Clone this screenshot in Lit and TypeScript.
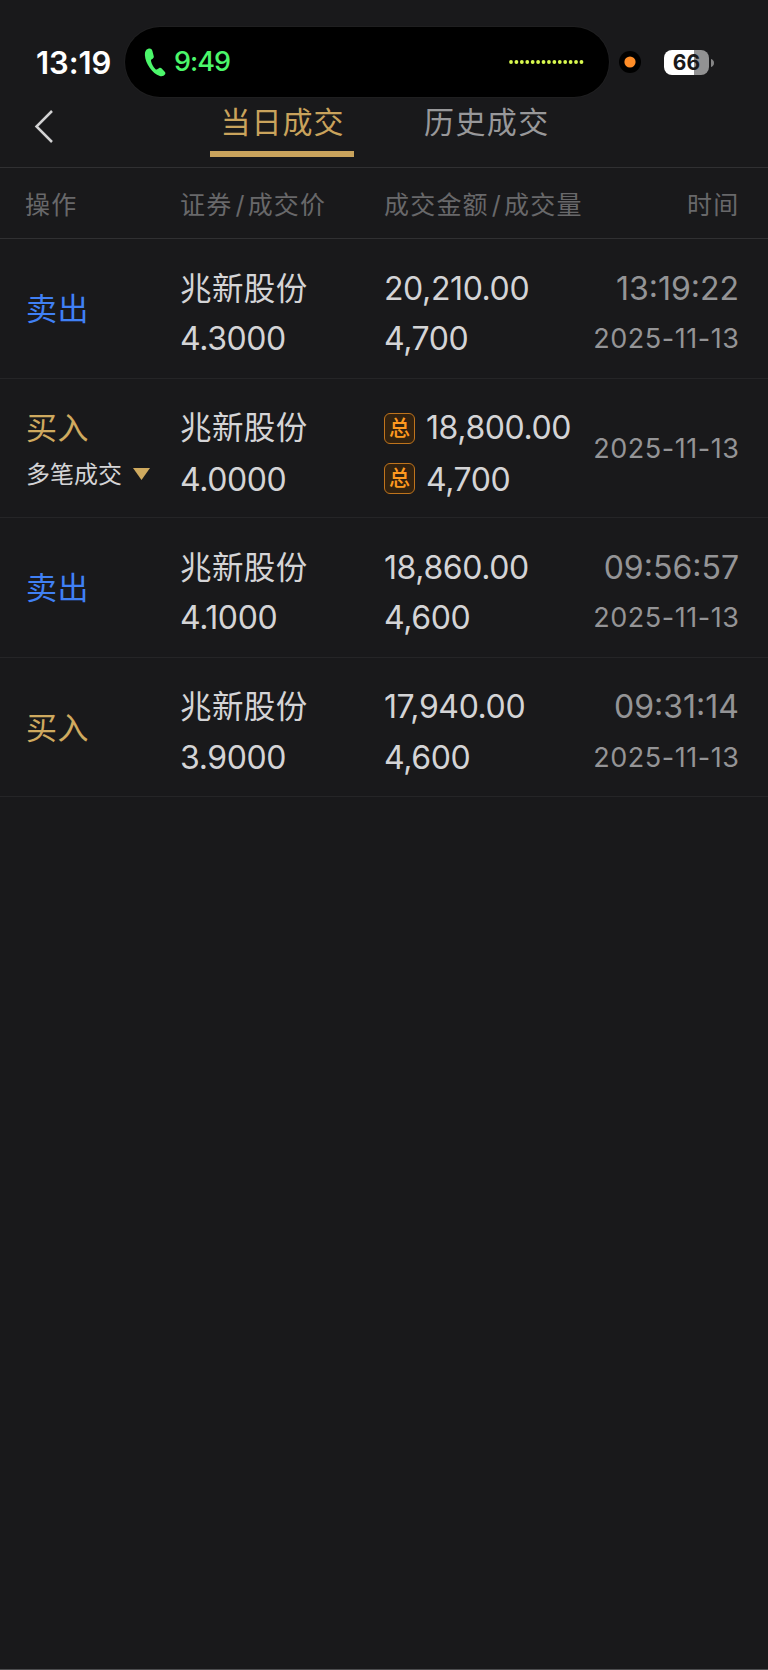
import { LitElement, html, css, svg, nothing } from "lit";
import { customElement, property } from "lit/decorators.js";
import { classMap } from "lit/directives/class-map.js";

interface Trade {
  side: "buy" | "sell";
  name: string;
  price: string;
  amount: string;
  volume: string;
  time?: string;
  date: string;
  merged?: boolean;
}

const TRADES: Trade[] = [
  { side: "sell", name: "兆新股份", price: "4.3000", amount: "20,210.00", volume: "4,700", time: "13:19:22", date: "2025-11-13" },
  { side: "buy", name: "兆新股份", price: "4.0000", amount: "18,800.00", volume: "4,700", date: "2025-11-13", merged: true },
  { side: "sell", name: "兆新股份", price: "4.1000", amount: "18,860.00", volume: "4,600", time: "09:56:57", date: "2025-11-13" },
  { side: "buy", name: "兆新股份", price: "3.9000", amount: "17,940.00", volume: "4,600", time: "09:31:14", date: "2025-11-13" },
];

@customElement("status-bar")
class StatusBar extends LitElement {
  static styles = css`
    :host { display: flex; height: 98px; padding: 27px 0 0 36px; box-sizing: border-box; align-items: flex-start; }
    .clock { width: 89px; height: 70px; line-height: 71px; font-size: 31px; font-weight: 600; color: #fff; letter-spacing: -0.1px; white-space: nowrap; }
    .island { width: 484px; height: 70px; box-sizing: border-box; border-radius: 35px; background: #000; box-shadow: 0 0 0 1px #1f1f20; display: flex; align-items: center; padding: 0 25px 0 19px; }
    .call { margin-left: 8px; font-size: 27px; font-weight: 500; color: #4cf76b; line-height: 68px; letter-spacing: -1px; }
    .wave { margin-left: auto; margin-bottom: 1px; display: block; }
    .mic { width: 22px; height: 22px; margin: 24px 0 0 10px; display: block; }
    .battery { margin: 23px 0 0 23px; display: flex; align-items: center; }
    .cell { width: 45px; height: 25px; border-radius: 8px; background: linear-gradient(90deg, #fff 30px, #929293 30px); color: #19191a; font-size: 21px; font-weight: 700; line-height: 26px; text-align: center; }
    .cap { display: block; margin-left: 2px; }
  `;
  render() {
    return html`
      <div class="clock">13:19</div>
      <div class="island">
        <svg width="22" height="29" viewBox="0 0 22 29">
          <path fill="#4cf76b" d="M4.200 .8C1.800 1.500.7 3.900.9 7.200 1.400 15.500 8.300 25.600 15.800 28c2.200.6 4.300-.1 5.300-1.700.5-.9.3-1.800-.4-2.600l-3-3.200c-.8-.8-1.800-.9-2.800-.3l-1.700 1.100c-.7.4-1.300.3-1.900-.3-2.100-2.100-3.600-5-4.300-7.900-.2-.8.1-1.400.8-1.800l.9-.6c1-.6 1.300-1.500 1-2.600l-1.300-5C8 1.100 6.600.2 4.200.8Z"/>
        </svg>
        <span class="call">9:49</span>
        <svg class="wave" width="75" height="4" viewBox="0 0 75 4">
          ${Array.from({ length: 14 }, (_, i) => svg`<circle cx=${2 + i * 5.42} cy="2" r="1.900" fill="#d9f94f"/>`)}
        </svg>
      </div>
      <svg class="mic" viewBox="0 0 22 22"><circle cx="11" cy="11" r="11" fill="#000"/><circle cx="11" cy="11" r="5.600" fill="#ff8d28"/></svg>
      <div class="battery">
        <div class="cell">66</div>
        <svg class="cap" width="3" height="8" viewBox="0 0 3 8"><path fill="#858586" d="M0 0C1.800.6 3 2 3 4S1.800 7.400 0 8Z"/></svg>
      </div>
    `;
  }
}

@customElement("nav-tabs")
class NavTabs extends LitElement {
  static styles = css`
    :host { display: flex; height: 70px; box-sizing: border-box; border-bottom: 1px solid #303032; }
    .back { width: 210px; padding: 12px 0 0 34px; box-sizing: border-box; }
    .back svg { display: block; }
    .tab { height: 59px; box-sizing: border-box; font-size: 30px; letter-spacing: 1px; line-height: 49px; color: #98989a; white-space: nowrap; }
    .active { width: 143.500px; margin-right: 70.500px; padding-left: 10.500px; color: #c9a35c; border-bottom: 6px solid #c9a35c; }
    .other { letter-spacing: 1.400px; }
  `;
  render() {
    return html`
      <div class="back">
        <svg width="20" height="34" viewBox="0 0 20 34"><path d="M18 1 2.500 16.500 18 32" fill="none" stroke="#d2d2d3" stroke-width="2.500"/></svg>
      </div>
      <div class="tab active">当日成交</div>
      <div class="tab other">历史成交</div>
    `;
  }
}

@customElement("trade-row")
class TradeRow extends LitElement {
  @property({ attribute: false }) trade!: Trade;
  static styles = css`
    :host { display: grid; grid-template-columns: 155px 204px 1fr auto; padding: 0 29px 0 25px; height: 139.500px; box-sizing: border-box; border-bottom: 1px solid #252527; align-items: center; font-size: 32px; color: #d4d4d6; white-space: nowrap; }
    .stack { display: flex; flex-direction: column; padding-top: 12px; }
    .stack.pair { padding-top: 14px; }
    .line { height: 50.500px; line-height: 50.500px; display: flex; align-items: center; }
    .pair .line + .line { height: 52.500px; line-height: 52.500px; }
    .name { font-size: 31.500px; letter-spacing: 0.400px; }
    .num { letter-spacing: -0.400px; }
    .stack.side { padding: 2px 0 0 1px; }
    .stack.side.pair { padding-top: 0; }
    .op { line-height: 48px; font-size: 31px; letter-spacing: 0.400px; }
    .sell { color: #4080f5; }
    .buy { color: #cfaa5f; }
    .multi { display: flex; align-items: center; gap: 11px; height: 42px; margin-bottom: -2px; font-size: 24px; color: #d4d4d6; }
    .multi svg { margin-top: 2px; }
    .when { align-items: flex-end; color: #949496; }
    .when.single { padding-top: 2px; }
    .date { font-size: 27px; letter-spacing: 0.550px; margin-right: -0.500px; }
    .tag { width: 31px; height: 31px; box-sizing: border-box; border: 1.500px solid #c0741c; border-radius: 6px; background: #33220f; color: #ff9a1f; font-size: 21px; font-weight: 500; line-height: 28px; letter-spacing: 0; text-align: center; margin-right: 11px; }
    .pair .line + .line .tag { margin-bottom: 3px; }
  `;
  render() {
    const t = this.trade;
    const tag = t.merged ? html`<span class="tag">总</span>` : nothing;
    const pair = !!t.merged;
    return html`
      <div class=${classMap({ stack: true, side: true, pair })}>
        <div class=${classMap({ op: true, [t.side]: true })}>${t.side === "buy" ? "买入" : "卖出"}</div>
        ${t.merged
          ? html`<div class="multi">多笔成交<svg width="17" height="12" viewBox="0 0 17 12"><path d="M0 0H17L8.500 12Z" fill="#cfaa5f"/></svg></div>`
          : nothing}
      </div>
      <div class=${classMap({ stack: true, pair })}><div class="line name">${t.name}</div><div class="line num">${t.price}</div></div>
      <div class=${classMap({ stack: true, pair })}><div class="line num">${tag}${t.amount}</div><div class="line num">${tag}${t.volume}</div></div>
      <div class=${classMap({ stack: true, when: true, single: !t.time })}>
        ${t.time ? html`<div class="line">${t.time}</div>` : nothing}
        <div class="line date">${t.date}</div>
      </div>
    `;
  }
}

@customElement("app-root")
class AppRoot extends LitElement {
  static styles = css`
    :host { display: flex; flex-direction: column; width: 768px; height: 1670px; box-sizing: border-box; background: #19191b; border-bottom: 1px solid #4d4d4f; overflow: hidden; font-family: Inter, "Noto Sans CJK SC", sans-serif; }
    .head { display: grid; grid-template-columns: 155px 204px 1fr auto; padding: 0 28.500px 0 25px; height: 71px; box-sizing: border-box; border-bottom: 1px solid #303032; line-height: 74px; font-size: 25px; letter-spacing: 1.200px; color: #68686a; white-space: nowrap; }
    .slash { margin: 0 2px 0 3px; }
  `;
  render() {
    return html`
      <status-bar></status-bar>
      <nav-tabs></nav-tabs>
      <div class="head">
        <span>操作</span><span>证券<span class="slash">/</span>成交价</span><span>成交金额<span class="slash">/</span>成交量</span><span>时间</span>
      </div>
      ${TRADES.map((t) => html`<trade-row .trade=${t}></trade-row>`)}
    `;
  }
}
